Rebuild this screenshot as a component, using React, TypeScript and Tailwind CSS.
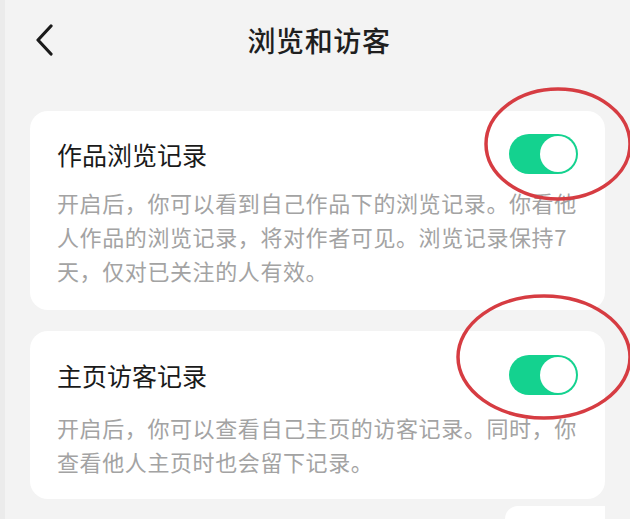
import React from "react";

const font = { fontFamily: '"Noto Sans CJK SC", "Noto Sans", sans-serif' };

function Toggle() {
    return (
        <div className="flex h-[40px] w-[69px] flex-none items-center justify-end rounded-full bg-[#14d28f] p-[2px]">
            <div className="h-[36px] w-[36px] rounded-full bg-white" />
        </div>
    );
}

function SettingCard({ title, lines, className, descClass }: { title: string; lines: string[]; className: string; descClass: string }) {
    return (
        <div className={`rounded-[18px] bg-white pl-[27px] pr-[27px] ${className}`}>
            <div className="flex items-center justify-between">
                <div className="text-[25px] leading-[32px] text-[#1a1a1a]">{title}</div>
                <Toggle />
            </div>
            <div className={`text-[22px] leading-[34px] tracking-[0.6px] text-[#a3a3a3] ${descClass}`}>
                {lines.map((l, i) => (
                    <div key={i} className="whitespace-nowrap">
                        {l}
                    </div>
                ))}
            </div>
        </div>
    );
}

export default function App() {
    return (
        <div className="relative h-[519px] w-[630px] overflow-hidden border-l-[5px] border-[#ebebeb] bg-[#f3f3f3]" style={font}>
            <div className="flex h-[80px] items-center pl-[28px] pr-[25px]">
                <svg width="22" height="32" viewBox="0 0 22 32" className="flex-none">
                    <path d="M18 2 L5 16 L18 30" fill="none" stroke="#1a1a1a" strokeWidth="3.2" strokeLinecap="round" strokeLinejoin="round" />
                </svg>
                <div className="flex-1 pr-[22px] text-center text-[28px] font-medium tracking-[0.6px] text-[#1f1f1f]">浏览和访客</div>
            </div>
            <div className="flex flex-col gap-[21px] pl-[25px] pr-[25px] pt-[31px]">
                <SettingCard
                    className="pb-[23px] pt-[23px]"
                    descClass="mt-[11px]"
                    title="作品浏览记录"
                    lines={["开启后，你可以看到自己作品下的浏览记录。你看他", "人作品的浏览记录，将对作者可见。浏览记录保持7", "天，仅对已关注的人有效。"]}
                />
                <SettingCard
                    className="pb-[21px] pt-[24px]"
                    descClass="mt-[15px]"
                    title="主页访客记录"
                    lines={["开启后，你可以查看自己主页的访客记录。同时，你", "查看他人主页时也会留下记录。"]}
                />
            </div>
            <div className="absolute bottom-0 right-[25px] h-[13px] w-[100px] rounded-tl-[14px] bg-white" />
            <svg className="pointer-events-none absolute left-0 top-0" width="630" height="519">
                <ellipse cx="553" cy="144" rx="72" ry="55" fill="none" stroke="#d63c42" strokeWidth="3.5" />
                <ellipse cx="539" cy="357" rx="86" ry="61" fill="none" stroke="#d63c42" strokeWidth="3.5" />
            </svg>
        </div>
    );
}
